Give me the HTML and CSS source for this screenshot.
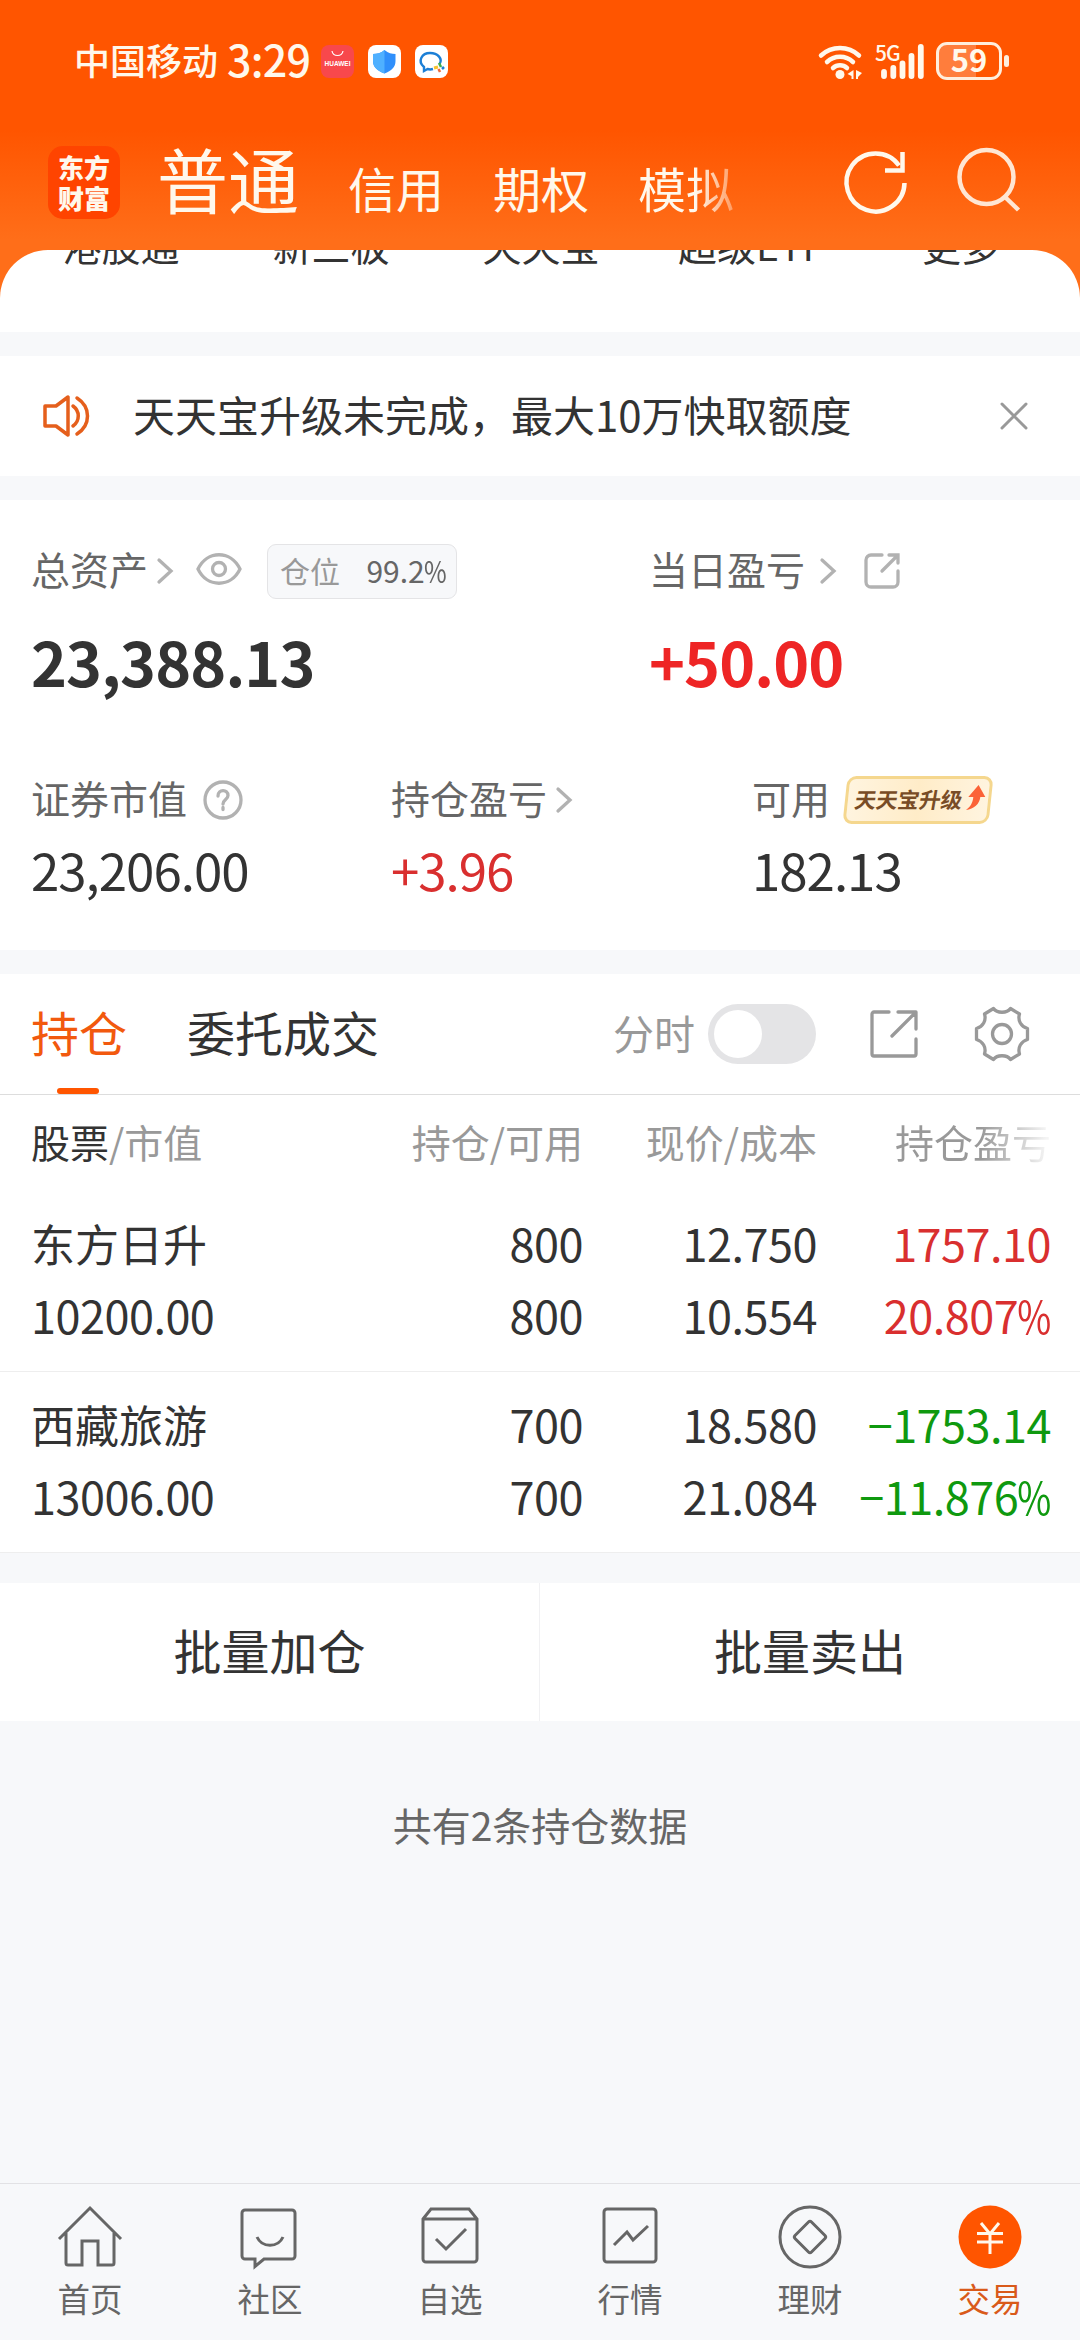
FILE: index.html
```html
<!DOCTYPE html>
<html lang="zh-CN">

<head>
    <meta charset="UTF-8">
    <meta name="viewport" content="width=device-width, initial-scale=1.0">
    <title>交易 - 持仓</title>
    <link rel="stylesheet" href="styles.css">
</head>

<body>
    <header class="header">
        <div class="status-bar">
            <span class="carrier">中国移动</span>
            <span class="time">3:29</span>
            <div class="app-icons">
                <svg width="33" height="33" viewBox="0 0 33 33">
                    <rect width="33" height="33" rx="8" fill="#f8484c"/>
                    <path d="M11 6c1 6 10 6 11 0" fill="none" stroke="#fff" stroke-width="1.2"/>
                    <text x="16.5" y="21" class="huawei">HUAWEI</text>
                </svg>
                <svg width="33" height="33" viewBox="0 0 33 33">
                    <rect width="33" height="33" rx="8" fill="#fff"/>
                    <path d="M16.500 5c4 3 7 4 11 4v7c0 6-4 10-11 12.500C9.500 26 5 22 5 16V9c4 0 8-1 11.500-4z" fill="#2f8ffb"/>
                    <path d="M16.500 5v23.500C9.500 26 5 22 5 16V9c4 0 8-1 11.500-4z" fill="#4fb0ff"/>
                </svg>
                <svg width="33" height="33" viewBox="0 0 33 33">
                    <rect width="33" height="33" rx="8" fill="#fff"/>
                    <path d="M18 24c-2 .6-4 .5-5.500 0L9 26v-4C2 16 7 8 15 8s13 6 9.500 11" fill="none" stroke="#1c7fd6" stroke-width="2.400"/>
                    <path d="M24 18l2 4" stroke="#3fae49" stroke-width="2.500"/>
                    <path d="M19 23l4-1" stroke="#f8c22e" stroke-width="3"/>
                    <path d="M23.500 24l1.500 3" stroke="#ee6b3b" stroke-width="2.500"/>
                    <path d="M27 24l2-2" stroke="#1c7fd6" stroke-width="2.500"/>
                </svg>
            </div>
            <div class="signals">
                <svg class="wifi" width="46" height="37" viewBox="0 0 46 37">
                    <g fill="none" stroke="#fff8ec" stroke-width="4.500" stroke-linecap="round">
                        <path d="M3 12.500a28 28 0 0 1 38 0"/>
                        <path d="M9 19a19 19 0 0 1 26 0"/>
                        <path d="M15 25a10.500 10.500 0 0 1 14 0"/>
                    </g>
                    <circle cx="22" cy="31.500" r="4.500" fill="#fff8ec"/>
                    <path d="M35.500 27v9h-2v-3l-4-2zM38 27v9h2v-2l4-4z" fill="#fff8ec"/>
                </svg>
                <svg class="bars" width="52" height="37" viewBox="0 0 52 37">
                    <text x="1" y="18" class="net">5G</text>
                    <g stroke="#fff8ec" stroke-width="5.800" stroke-linecap="round">
                        <path d="M10 29v4M19.300 25v8M28.500 20.500v12.500M37.500 13v20M46.800 4v29"/>
                    </g>
                </svg>
                <svg width="74" height="38" viewBox="0 0 74 38">
                    <path d="M12 2h28v34H12A10 10 0 0 1 2 26V12A10 10 0 0 1 12 2z" fill="#ff7d3c"/>
                    <rect x="1.500" y="1.500" width="63" height="35" rx="9.500" fill="none" stroke="#ffeedd" stroke-width="3"/>
                    <rect x="68" y="13" width="5" height="12" rx="2.500" fill="#ffeedd"/>
                    <text x="33" y="30" class="battery">59</text>
                </svg>
            </div>
        </div>
        <div class="nav-bar">
            <div class="logo"><span>东方</span><span>财富</span></div>
            <nav class="accounts">
                <a class="current">普通</a>
                <a>信用</a>
                <a>期权</a>
                <a class="faded">模拟</a>
            </nav>
            <svg class="refresh" width="62" height="66" viewBox="0 0 62 66" fill="none" stroke="#fff8ec" stroke-width="4.500">
                <path d="M59.500 35A29 29 0 1 1 54 17.500"/>
                <path d="M57.500 4v18.500H40"/>
            </svg>
            <svg class="search" width="64" height="66" viewBox="0 0 64 66" fill="none" stroke="#ffe6d3" stroke-width="4.500">
                <circle cx="29.500" cy="30" r="27"/>
                <path d="M48 50l13.500 13"/>
            </svg>
        </div>
    </header>

    <section class="quick">
        <span>港股通</span>
        <span>新三板</span>
        <span>天天宝</span>
        <span>超级ETF</span>
        <span>更多</span>
    </section>

    <section class="notice">
        <svg width="48" height="44" viewBox="0 0 48 44" fill="none" stroke="#e55f1c" stroke-width="3.500" stroke-linejoin="round" stroke-linecap="round">
            <path d="M3 12h11L26 3v38L14 32H3z"/>
            <path d="M31 12c7 5 7 15 0 20M35 4c14 9 14 27 0 36"/>
        </svg>
        <p>天天宝升级未完成，最大10万快取额度</p>
        <svg width="28" height="28" viewBox="0 0 28 28" stroke="#999" stroke-width="3" stroke-linecap="round">
            <path d="M2 2l24 24M26 2L2 26"/>
        </svg>
    </section>

    <section class="assets">
        <div class="summary">
            <div class="total">
                <div class="label">总资产
                    <svg class="chevron" width="16" height="26" viewBox="0 0 16 26"><path d="M2 2l12 11L2 24"/></svg>
                    <svg class="eye" width="46" height="32" viewBox="0 0 46 32"><path d="M2 16C11-3 35-3 44 16 35 35 11 35 2 16z"/><circle cx="23" cy="16" r="6.500"/></svg>
                    <span class="ratio"><i>仓位</i><span>99.2<span class="pct">%</span></span></span>
                </div>
                <strong>23,388.13</strong>
            </div>
            <div class="today">
                <div class="label">当日盈亏
                    <svg class="chevron" width="16" height="26" viewBox="0 0 16 26"><path d="M2 2l12 11L2 24"/></svg>
                    <svg class="share" width="36" height="36" viewBox="0 0 36 36"><path d="M18 2H7a5 5 0 0 0-5 5v22a5 5 0 0 0 5 5h22a5 5 0 0 0 5-5V18M25 2h9v8M34 2L18 18"/></svg>
                </div>
                <strong class="up">+50.00</strong>
            </div>
        </div>
        <div class="details">
            <div>
                <div class="label">证券市值
                    <svg class="help" width="40" height="40" viewBox="0 0 40 40"><circle cx="20" cy="20" r="18"/><path d="M15 16c0-7 10-7 10-.5 0 4-5 4-5 8.500M20 27.500v2"/></svg>
                </div>
                <b>23,206.00</b>
            </div>
            <div>
                <div class="label">持仓盈亏
                    <svg class="chevron" width="16" height="26" viewBox="0 0 16 26"><path d="M2 2l12 11L2 24"/></svg>
                </div>
                <b class="up">+3.96</b>
            </div>
            <div>
                <div class="label">可用
                    <span class="upgrade"><em>天天宝升级</em>
                        <svg width="20" height="26" viewBox="0 0 20 26"><path d="M11 0l8 12h-5c0 7-5 12-13 13 4-3 6-7 6-13H2z" fill="#fb6237"/></svg>
                    </span>
                </div>
                <b>182.13</b>
            </div>
        </div>
    </section>

    <section class="positions">
        <div class="tabs">
            <a class="tab active">持仓</a>
            <a class="tab">委托成交</a>
            <span class="switch-label">分时</span>
            <span class="switch"></span>
            <svg class="export" width="48" height="48" viewBox="0 0 48 48"><path d="M19 2H4a2 2 0 0 0-2 2v40a2 2 0 0 0 2 2h40a2 2 0 0 0 2-2V29M28 2h18v17M45 3L22 26"/></svg>
            <svg class="gear" width="54" height="54" viewBox="0 0 54 54">
                <path d="M18.500 1.500C22 6.500 32 6.500 35.500 1.500L44.500 7C42.500 13.500 46 19.500 52.500 21.500V32.500C46 34.500 42.500 40.500 44.500 47L35.500 52.500C32 47.500 22 47.500 18.500 52.500L9.500 47C11.500 40.500 8 34.500 1.500 32.500V21.500C8 19.500 11.500 13.500 9.500 7z"/>
                <circle cx="27" cy="27" r="9.500"/>
            </svg>
        </div>

        <div class="row head">
            <div><span class="dark">股票</span>/市值</div>
            <div>持仓/可用</div>
            <div>现价/成本</div>
            <div class="clipped">持仓盈亏</div>
        </div>
        <div class="row">
            <div><span class="name">东方日升</span><br>10200.00</div>
            <div>800<br>800</div>
            <div>12.750<br>10.554</div>
            <div class="up">1757.10<br>20.807<span class="pct">%</span></div>
        </div>
        <div class="row">
            <div><span class="name">西藏旅游</span><br>13006.00</div>
            <div>700<br>700</div>
            <div>18.580<br>21.084</div>
            <div class="down">−1753.14<br>−11.876<span class="pct">%</span></div>
        </div>
    </section>

    <section class="batch">
        <a>批量加仓</a>
        <a>批量卖出</a>
    </section>

    <p class="count">共有2条持仓数据</p>

    <footer class="tab-bar">
        <a>
            <svg width="66" height="66" viewBox="0 0 66 66"><path d="M2 35L33 4l31 31M9 29v30a2 2 0 0 0 2 2h14V37h16v24h14a2 2 0 0 0 2-2V29"/></svg>
            首页
        </a>
        <a>
            <svg width="66" height="66" viewBox="0 0 66 66"><path d="M8 6h47a3 3 0 0 1 3 3v43a3 3 0 0 1-3 3H27l-9 7.500V55H8a3 3 0 0 1-3-3V9a3 3 0 0 1 3-3zM20 33c5 11 21 11 26 0"/></svg>
            社区
        </a>
        <a>
            <svg width="66" height="66" viewBox="0 0 66 66"><path d="M6 15l8-10h38l8 10v40a3 3 0 0 1-3 3H9a3 3 0 0 1-3-3zM6 15h54M19 35l10 10 20-20"/></svg>
            自选
        </a>
        <a>
            <svg width="66" height="66" viewBox="0 0 66 66"><rect x="7" y="5" width="52" height="53" rx="3"/><path d="M17 41l13-13 6 8 15-14"/></svg>
            行情
        </a>
        <a>
            <svg width="66" height="66" viewBox="0 0 66 66"><circle cx="33" cy="33" r="30"/><path d="M31.500 18q1.500-1.500 3 0L48 31.500q1.500 1.500 0 3L34.500 48q-1.500 1.500-3 0L18 34.500q-1.500-1.500 0-3z"/></svg>
            理财
        </a>
        <a class="active">
            <svg width="66" height="66" viewBox="0 0 66 66"><circle class="coin" cx="33" cy="33" r="31.500"/><path class="yen" d="M24 19l9 11 9-11M20 29.500h26M20 38h26M33 30v20"/></svg>
            交易
        </a>
    </footer>
</body>

</html>
```

FILE: styles.css
```css
* {
    box-sizing: border-box;
}

body {
    margin: 0;
    width: 1080px;
    height: 2340px;
    display: flex;
    flex-direction: column;
    font-family: "Noto Sans CJK SC", sans-serif;
    background-color: #f7f8fa;
    color: #333;
    overflow: hidden;
}

p {
    margin: 0;
}

i {
    font-style: normal;
}

svg {
    flex: none;
    overflow: visible;
}

.up {
    color: #d92f2f;
}

.down {
    color: #0f990f;
}

.pct {
    display: inline-block;
    margin-left: -0.18em;
    transform: scaleX(0.82);
    transform-origin: right;
}

/* header */
.header {
    height: 310px;
    background: linear-gradient(#ff5500 130px, #ff6e19 240px);
    flex: none;
}

.status-bar {
    height: 120px;
    padding: 2px 70px 0 74px;
    display: flex;
    align-items: center;
    color: #fff8ec;
}

.carrier {
    font-size: 36px;
    line-height: 50px;
    font-weight: 500;
    margin-top: -4px;
}

.time {
    font-size: 43px;
    line-height: 50px;
    font-weight: 500;
    letter-spacing: -0.8px;
    margin: -6px 0 0 9px;
}

.app-icons {
    display: flex;
    gap: 14px;
    margin-left: 11px;
}

.huawei {
    font: bold 6.5px "Liberation Sans", sans-serif;
    fill: #fff;
    text-anchor: middle;
}

.signals {
    display: flex;
    align-items: center;
    margin-left: auto;
}

.bars {
    margin: 0 10px;
}

.net {
    font: 500 21px "Noto Sans CJK SC", sans-serif;
    fill: #fff8ec;
    letter-spacing: -1px;
}

.battery {
    font: bold 31px "Noto Sans CJK SC", sans-serif;
    fill: #fff8ec;
    text-anchor: middle;
}

.nav-bar {
    height: 130px;
    padding: 0 59px 0 48px;
    display: flex;
    align-items: center;
}

.logo {
    width: 72px;
    height: 73px;
    margin-top: -6px;
    border-radius: 15px;
    background: #ff4400;
    color: #fff8ec;
    display: flex;
    flex-direction: column;
    align-items: center;
    justify-content: center;
    font-size: 26px;
    font-weight: 900;
    line-height: 31px;
}

.accounts {
    display: flex;
    align-items: baseline;
    margin: -6px 0 0 37px;
    font-size: 48px;
    line-height: 80px;
    color: #fff8ec;
}

.accounts a {
    margin-right: 49px;
}

.accounts .current {
    font-size: 71px;
    margin-right: 49px;
}

.accounts .faded {
    background: linear-gradient(90deg, #fff8ec 60%, #ff9a60);
    -webkit-background-clip: text;
    background-clip: text;
    color: transparent;
    margin-right: 0;
}

.refresh {
    margin: -8px 0 0 auto;
}

.search {
    margin: -10px 0 0 50px;
}

/* shortcuts, scrolled half under the header */
.quick {
    flex: none;
    height: 82px;
    margin-top: -60px;
    padding: 0 14px 0 16px;
    background: #fff;
    border-radius: 48px 48px 0 0;
    overflow: hidden;
    display: grid;
    grid-template-columns: repeat(5, 1fr);
    text-align: center;
    font-size: 39px;
    line-height: 40px;
}

.quick span {
    margin-top: -26px;
}

.notice {
    flex: none;
    height: 120px;
    margin-top: 24px;
    padding: 0 52px 0 42px;
    background: #fff;
    display: flex;
    align-items: center;
}

.notice p {
    flex: 1;
    margin: -5px 0 0 43px;
    font-size: 42px;
}

/* assets */
.assets {
    flex: none;
    height: 450px;
    margin-top: 24px;
    padding: 40px 31px 0;
    background: #fff;
}

.summary {
    display: grid;
    grid-template-columns: 618px 1fr;
    height: 229px;
}

.label {
    display: flex;
    align-items: center;
    height: 60px;
    font-size: 39px;
    line-height: 56px;
    padding-bottom: 4px;
    color: #666;
}

.label svg {
    fill: none;
    stroke: #b2b2b2;
    stroke-width: 3.3;
    stroke-linecap: round;
    margin-top: 6px;
}

.label .chevron {
    margin-left: 9px;
}

.today .chevron {
    margin-left: 15px;
}

.label .eye {
    margin-left: 23px;
    margin-top: 2px;
}

.label .share {
    margin-left: 28px;
}

.label .help {
    margin-left: 16px;
}

.ratio {
    display: flex;
    justify-content: space-between;
    width: 190px;
    height: 55px;
    margin: 6px 0 0 25px;
    padding: 0 9px 0 12px;
    border: 1px solid #e4e4e6;
    border-radius: 9px;
    background: #f7f8fa;
    font-size: 30px;
    line-height: 50px;
}

.ratio i {
    color: #999;
}

.summary strong {
    display: block;
    font-size: 61px;
    line-height: 70px;
    margin-top: 26px;
    letter-spacing: -0.9px;
}

.summary .up {
    color: #ee2525;
}

.details {
    display: grid;
    grid-template-columns: 360px 361px 1fr;
}

.details b {
    display: block;
    font-size: 51px;
    line-height: 60px;
    margin-top: 10px;
    font-weight: normal;
    letter-spacing: -1px;
}

.upgrade {
    display: flex;
    align-items: center;
    width: 146px;
    height: 48px;
    margin: 6px 0 0 15px;
    padding-left: 7px;
    border: 3px solid #f5d78e;
    border-radius: 9px;
    background: linear-gradient(90deg, #fff4df, #ffecc8 50%, #fff4df);
    transform: skewX(-6deg);
}

.upgrade em {
    font-size: 21.5px;
    line-height: 30px;
    font-weight: bold;
    color: #784c26;
    transform: skewX(-4deg);
    font-style: normal;
    white-space: nowrap;
    margin-top: -2px;
}

.label .upgrade svg {
    stroke: none;
    margin: -4px 0 0 3px;
}

/* positions */
.positions {
    flex: none;
    margin-top: 24px;
    background: #fff;
}

.tabs {
    height: 121px;
    padding: 0 51px 0 31px;
    display: flex;
    align-items: center;
    border-bottom: 1px solid #ddd;
}

.tab {
    position: relative;
    font-size: 48px;
    line-height: 120px;
    margin-right: 60px;
    margin-top: -6px;
}

.tab.active {
    color: #f2590e;
}

.tab.active::after {
    content: "";
    position: absolute;
    left: 26px;
    bottom: -3px;
    width: 42px;
    height: 6px;
    border-radius: 3px;
    background: #ff5500;
}

.switch-label {
    margin: -4px 13px 0 auto;
    font-size: 41px;
    color: #999;
}

.switch {
    width: 108px;
    height: 60px;
    padding: 6px;
    border-radius: 30px;
    background: #e4e4e6;
}

.switch::before {
    content: "";
    display: block;
    width: 48px;
    height: 48px;
    border-radius: 50%;
    background: #fff;
}

.export,
.gear {
    fill: none;
    stroke: #999;
    stroke-width: 3.3;
    stroke-linejoin: round;
    stroke-linecap: round;
}

.export {
    margin: 0 57px 0 54px;
}

.row {
    height: 181px;
    padding: 16px 29px 0 31px;
    display: grid;
    grid-template-columns: 200px 352px 234px 234px;
    text-align: right;
    font-size: 45px;
    line-height: 72px;
    letter-spacing: -0.5px;
    white-space: nowrap;
    border-bottom: 1px solid #eee;
}

.row div:first-child {
    text-align: left;
}

.row .name {
    font-size: 44px;
    letter-spacing: 0;
}

.row.head {
    height: 96px;
    padding-top: 10px;
    font-size: 39px;
    letter-spacing: 0;
    color: #999;
    border: none;
}

.dark {
    color: #333;
}

.row .clipped {
    background: linear-gradient(90deg, #999 70%, #f4f4f4 98%);
    -webkit-background-clip: text;
    background-clip: text;
    color: transparent;
}

.batch {
    flex: none;
    height: 138px;
    margin-top: 30px;
    display: grid;
    grid-template-columns: 539px 1fr;
    background: #fff;
    text-align: center;
    font-size: 48px;
    line-height: 132px;
}

.batch a + a {
    border-left: 1px solid #f1f1f3;
}

.count {
    margin-top: 75px;
    text-align: center;
    font-size: 39px;
    line-height: 56px;
    color: #666;
}

/* bottom tab bar */
.tab-bar {
    height: 157px;
    margin-top: auto;
    padding-top: 20px;
    display: grid;
    grid-template-columns: repeat(6, 1fr);
    border-top: 1px solid #e2e2e5;
}

.tab-bar a {
    display: flex;
    flex-direction: column;
    align-items: center;
    font-size: 32.5px;
    line-height: 52px;
    color: #666;
}

.tab-bar svg {
    margin-bottom: 2px;
    fill: none;
    stroke: #666;
    stroke-width: 3;
}

.tab-bar .active {
    color: #d95a1a;
}

.tab-bar .coin {
    fill: #ff5500;
    stroke: none;
}

.tab-bar .yen {
    stroke: #fff8ec;
}
```
